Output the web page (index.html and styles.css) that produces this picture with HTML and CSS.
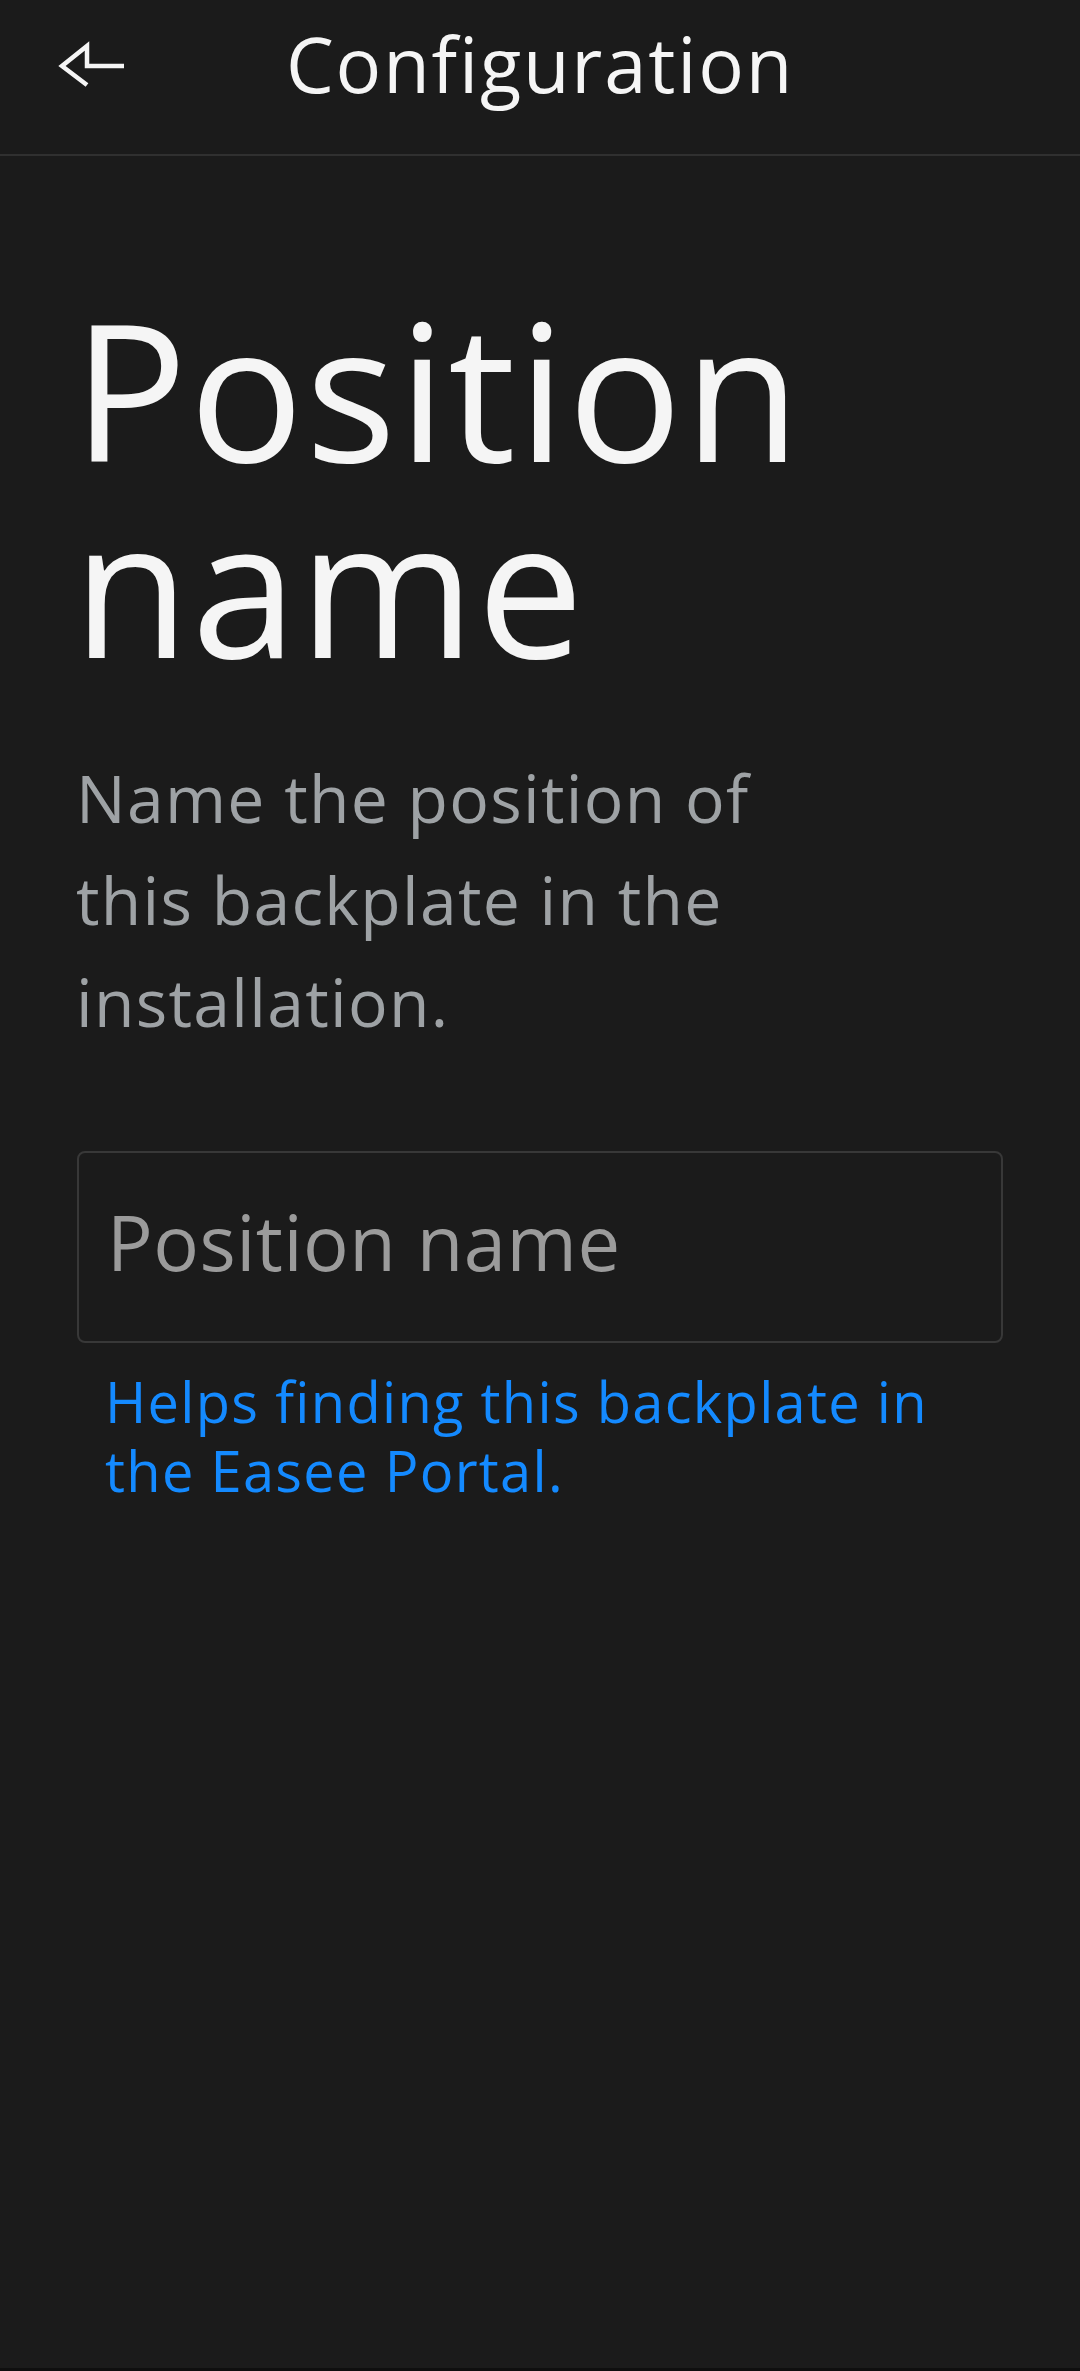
FILE: index.html
```html
<!DOCTYPE html>
<html lang="en">
<head>
<meta charset="utf-8">
<title>Configuration</title>
<link rel="stylesheet" href="styles.css">
</head>
<body>
<div class="screen">
  <header class="topbar">
    <button class="back" aria-label="Back">
      <svg class="back-icon" width="70" height="50" viewBox="0 0 70 50">
        <path d="M29 44 L4 25 L29 5 L29 25 L66 25" fill="none" stroke="#f5f5f5" stroke-width="4.5" stroke-linejoin="miter" stroke-linecap="butt"/>
      </svg>
    </button>
    <h1 class="title">Configuration</h1>
    <span class="spacer"></span>
  </header>
  <main class="content">
    <h2 class="heading">Position name</h2>
    <p class="description">Name the position of this backplate in the installation.</p>
    <input class="field" type="text" placeholder="Position name">
    <p class="helper">Helps finding this backplate in the Easee Portal.</p>
  </main>
</div>
</body>
</html>
```
FILE: styles.css
```css
html, body {
  margin: 0;
  padding: 0;
  background: #1b1b1b;
}

body {
  font-family: "Open Sans", "Noto Sans", sans-serif;
  color: #f5f5f5;
}

.screen {
  min-height: 2371px;
  box-sizing: border-box;
  border-bottom: 3px solid #0f0f0f;
  display: flex;
  flex-direction: column;
}

.topbar {
  height: 156px;
  box-sizing: border-box;
  border-bottom: 2px solid #303030;
  display: grid;
  grid-template-columns: 1fr auto 1fr;
  align-items: start;
  padding-top: 12px;
}

.back {
  justify-self: start;
  margin: 29px 0 0 58px;
  padding: 0;
  border: 0;
  background: none;
  width: 70px;
  height: 50px;
  display: block;
}

.back-icon {
  display: block;
}

.title {
  margin: 0;
  font-size: 76px;
  font-weight: 400;
  line-height: 104px;
  letter-spacing: 1.8px;
  color: #f5f5f5;
}

.content {
  padding: 135px 76px 0 76px;
  display: flex;
  flex-direction: column;
  align-items: flex-start;
}

.heading {
  margin: 0 0 0 -3px;
  font-size: 190px;
  font-weight: 400;
  line-height: 196px;
  letter-spacing: 2px;
  color: #f5f5f5;
  max-width: 800px;
}

.description {
  margin: 63px 0 0 0;
  font-size: 66px;
  font-weight: 400;
  line-height: 102px;
  letter-spacing: 1.3px;
  color: #9ea2a5;
  max-width: 760px;
}

.field {
  margin: 99px 0 0 1px;
  width: 926px;
  height: 192px;
  box-sizing: border-box;
  border: 2px solid #383838;
  border-radius: 8px;
  background: #1b1b1b;
  padding: 0 28px 12px 28px;
  font-family: "Open Sans", "Noto Sans", sans-serif;
  font-size: 76px;
  font-weight: 400;
  letter-spacing: 0.5px;
  color: #f5f5f5;
  outline: none;
}

.field::placeholder {
  color: #9b9b9b;
  opacity: 1;
}

.helper {
  margin: 24px 0 0 29px;
  font-size: 56px;
  font-weight: 400;
  line-height: 69px;
  letter-spacing: 1.3px;
  color: #148aff;
  max-width: 870px;
}
```
